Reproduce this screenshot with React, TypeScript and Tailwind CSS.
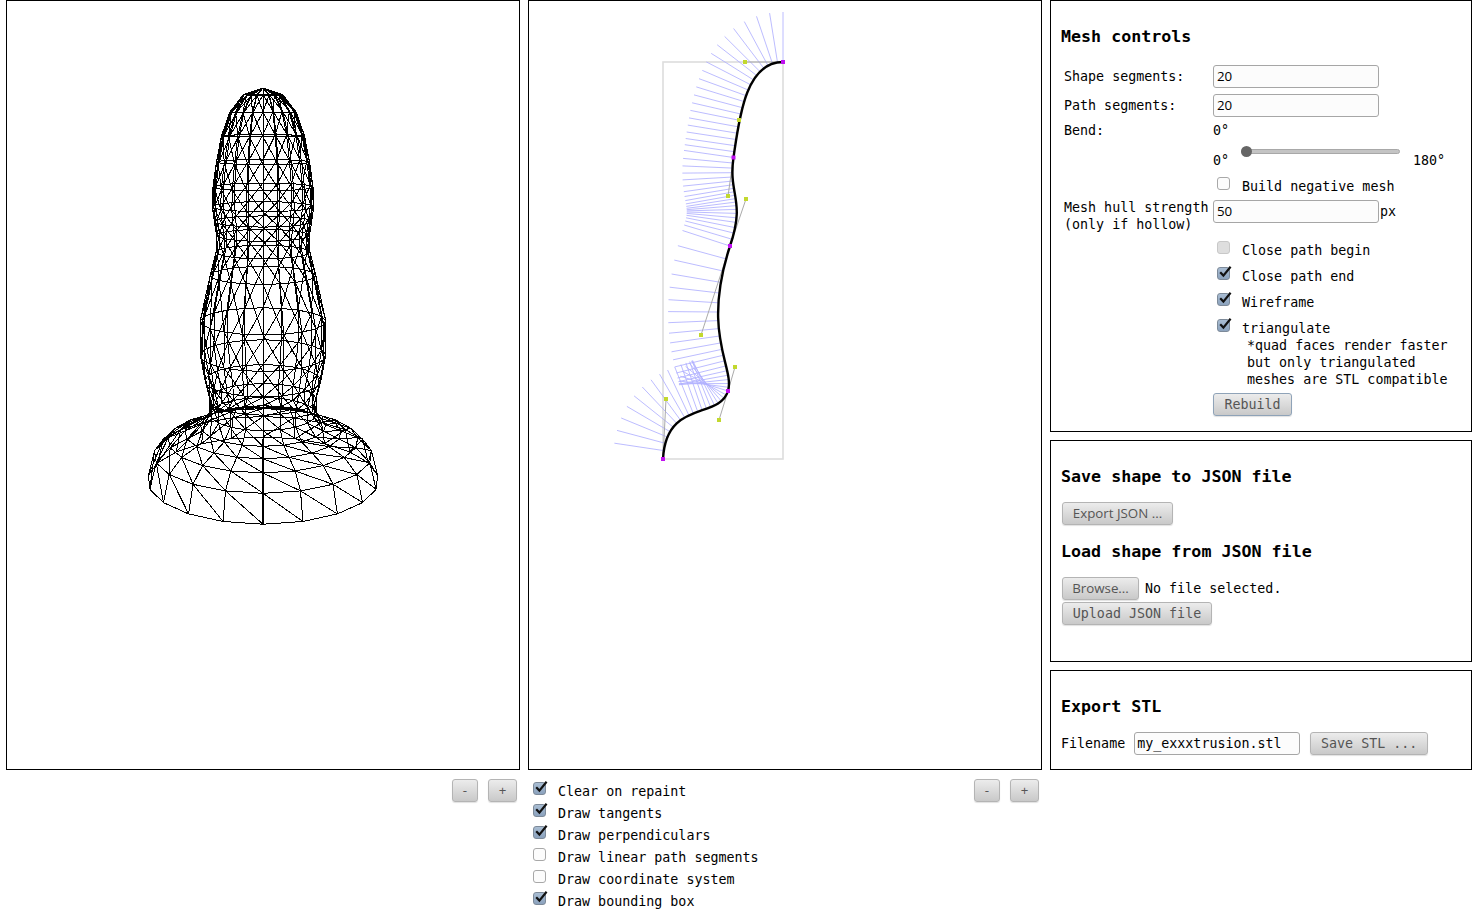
import { useMemo } from "react"

type Pt = [number, number]

// profile of the shape, in canvas coordinates of the 2d editor
const CURVES: Pt[][] = [
  [[783, 62], [745, 62], [739, 120], [733.5, 157.5]],
  [[733.5, 157.5], [728, 196], [746, 199], [730, 246]],
  [[730, 246], [701, 335], [735, 367], [728, 391]],
  [[728, 391], [719, 420], [666, 399], [663, 459]],
]

const bez = (c: Pt[], t: number): Pt => {
  const u = 1 - t
  return [
    u * u * u * c[0][0] + 3 * u * u * t * c[1][0] + 3 * u * t * t * c[2][0] + t * t * t * c[3][0],
    u * u * u * c[0][1] + 3 * u * u * t * c[1][1] + 3 * u * t * t * c[2][1] + t * t * t * c[3][1],
  ]
}

const bezD = (c: Pt[], t: number): Pt => {
  const u = 1 - t
  return [
    3 * u * u * (c[1][0] - c[0][0]) + 6 * u * t * (c[2][0] - c[1][0]) + 3 * t * t * (c[3][0] - c[2][0]),
    3 * u * u * (c[1][1] - c[0][1]) + 6 * u * t * (c[2][1] - c[1][1]) + 3 * t * t * (c[3][1] - c[2][1]),
  ]
}

function buildMesh() {
  const SEG = 20
  const rings: Pt[] = []
  CURVES.forEach((c, i) => {
    for (let s = i === 0 ? 0 : 1; s <= 5; s++) rings.push(bez(c, s / 5))
  })
  // camera tilted down by about 10 degrees
  const PITCH = 0.185
  const project = (r: number, y: number, a: number): Pt => {
    const X = r * Math.sin(a)
    const Z = -r * Math.cos(a)
    const Y = y - 62
    const depth = 932 + Z * Math.cos(PITCH) + Y * Math.sin(PITCH)
    const k = 960 / depth
    return [256 + X * k, 288 + (Y * Math.cos(PITCH) - Z * Math.sin(PITCH) - 195) * k]
  }
  let d = ""
  const line = (a: Pt, b: Pt) => {
    d += `M${a[0].toFixed(1)} ${a[1].toFixed(1)}L${b[0].toFixed(1)} ${b[1].toFixed(1)}`
  }
  for (let j = 0; j < rings.length; j++) {
    const r = 783 - rings[j][0]
    const y = rings[j][1]
    for (let i = 0; i < SEG; i++) {
      const a0 = (i / SEG) * Math.PI * 2
      const a1 = ((i + 1) / SEG) * Math.PI * 2
      const p = project(r, y, a0)
      if (j > 0) line(p, project(r, y, a1))
      if (j < rings.length - 1) {
        const r2 = 783 - rings[j + 1][0]
        const y2 = rings[j + 1][1]
        line(p, project(r2, y2, a0))
        line(p, project(r2, y2, a1))
      }
    }
  }
  return d
}

function buildPerps() {
  let d = ""
  CURVES.forEach((c) => {
    for (let s = 0; s < 20; s++) {
      const t = s / 20
      const p = bez(c, t)
      const v = bezD(c, t)
      const l = Math.hypot(v[0], v[1]) || 1
      // normal points away from the axis of the shape
      const qx = p[0] - (v[1] / l) * 50
      const qy = p[1] + (v[0] / l) * 50
      d += `M${(p[0] - 528).toFixed(1)} ${p[1].toFixed(1)}L${(qx - 528).toFixed(1)} ${qy.toFixed(1)}`
    }
  })
  return d
}

function MeshCanvas() {
  const d = useMemo(buildMesh, [])
  return (
    <svg width="512" height="768" className="block">
      <path d={d} stroke="#000" strokeWidth="1" fill="none" shapeRendering="crispEdges" />
      <path d="M256 438L256 524" stroke="#000" strokeWidth="2" fill="none" shapeRendering="crispEdges" />
    </svg>
  )
}

function ShapeCanvas() {
  const perps = useMemo(buildPerps, [])
  const curve =
    "M" + CURVES.map((c, i) => `${i === 0 ? `${c[0][0] - 529} ${c[0][1] - 1}` : ""}C${c[1][0] - 529} ${c[1][1] - 1} ${c[2][0] - 529} ${c[2][1] - 1} ${c[3][0] - 529} ${c[3][1] - 1}`).join("")
  const anchors = [CURVES[0][0], CURVES[0][3], CURVES[1][3], CURVES[2][3], CURVES[3][3]]
  const controls = CURVES.flatMap((c) => [c[1], c[2]])
  return (
    <svg width="512" height="768" className="block">
      <rect x="134" y="61" width="120" height="397" fill="none" stroke="#ddd" strokeWidth="1.6" />
      <g transform="translate(-1 -1)">
        <path d={perps} stroke="#b0b0ff" strokeWidth="1" strokeOpacity="0.85" fill="none" />
      </g>
      {CURVES.map((c, i) => (
        <g key={i} stroke="#aaa" strokeWidth="1" fill="none">
          <path d={`M${c[0][0] - 529} ${c[0][1] - 1}L${c[1][0] - 529} ${c[1][1] - 1}`} />
          <path d={`M${c[3][0] - 529} ${c[3][1] - 1}L${c[2][0] - 529} ${c[2][1] - 1}`} />
        </g>
      ))}
      <path d={curve} stroke="#000" strokeWidth="2.4" fill="none" />
      {controls.map((p, i) => (
        <rect key={i} x={p[0] - 531} y={p[1] - 3} width="4" height="4" fill="#c2d82e" />
      ))}
      {anchors.map((p, i) => (
        <rect key={i} x={p[0] - 531} y={p[1] - 3} width="4" height="4" fill="#c010f0" />
      ))}
    </svg>
  )
}

function Box({ checked, disabled }: { checked?: boolean; disabled?: boolean }) {
  return (
    <span
      className={`relative block h-[13px] w-[13px] shrink-0 rounded-[3px] border ${
        disabled
          ? "border-[#c8c8c8] bg-[#dedede]"
          : checked
            ? "border-[#7d8a99] bg-gradient-to-b from-[#a9bdd3] to-[#8ba2bd]"
            : "border-[#a8a8a8] bg-[#fcfcfc]"
      }`}
    >
      {checked && (
        <svg width="15" height="15" viewBox="0 0 15 15" className="absolute -top-[3px] left-0">
          <path d="M2.2 7.2 L5.4 10.6 L12.6 1.8" stroke="#111" strokeWidth="2.2" fill="none" />
        </svg>
      )}
    </span>
  )
}

function Btn({ children, className = "", sans }: { children: string; className?: string; sans?: boolean }) {
  return (
    <button
      className={`flex h-[23px] items-center justify-center rounded-[3px] border border-[#b4b4b4] bg-gradient-to-b from-[#ececec] to-[#c9c9c9] text-[#555] shadow-[0_1px_1px_rgba(0,0,0,0.12)] ${
        sans ? "font-['Open_Sans',sans-serif] text-[13.33px]" : ""
      } ${className}`}
    >
      {children}
    </button>
  )
}

function Field({ value, className = "" }: { value: string; className?: string }) {
  return (
    <input
      readOnly
      value={value}
      className={`h-[23px] rounded-[3px] border border-[#a6a6a6] bg-[#fcfcfc] text-black outline-none ${className}`}
    />
  )
}

function Heading({ children }: { children: string }) {
  return <h2 className="mt-px h-5 text-[16.67px] leading-5 font-bold text-black">{children}</h2>
}

function CheckRow({ label, checked, disabled }: { label: string; checked?: boolean; disabled?: boolean }) {
  return (
    <div className="ml-[153px] flex h-[26px]">
      <div className="mt-2">
        <Box checked={checked} disabled={disabled} />
      </div>
      <span className="ml-3 mt-[9px]">{label}</span>
    </div>
  )
}

function ListRow({ label, checked }: { label: string; checked?: boolean }) {
  return (
    <div className="flex h-[22px] items-start">
      <div className="mt-px">
        <Box checked={checked} />
      </div>
      <span className="ml-3 mt-[2px]">{label}</span>
    </div>
  )
}

function ZoomButtons() {
  return (
    <div className="flex gap-[10px]">
      <Btn className="w-[26px]" sans>-</Btn>
      <Btn className="w-[29px]" sans>+</Btn>
    </div>
  )
}

const NUM_FIELD = "w-[166px] pl-[3px] pb-[2px] font-['Open_Sans',sans-serif] text-[13.33px]"

export default function App() {
  return (
    <div className="flex h-[909px] gap-2 overflow-hidden bg-white pl-[6px] font-['DejaVu_Sans_Mono',monospace] text-[13.33px] leading-[17px] text-black">
      <div className="w-[514px]">
        <div className="h-[770px] border border-black">
          <MeshCanvas />
        </div>
        <div className="mt-[9px] flex justify-end pr-[3px]">
          <ZoomButtons />
        </div>
      </div>

      <div className="w-[514px]">
        <div className="h-[770px] border border-black">
          <ShapeCanvas />
        </div>
        <div className="flex justify-between pr-[3px]">
          <div className="mt-[11px] pl-[5px]">
            <ListRow label="Clear on repaint" checked />
            <ListRow label="Draw tangents" checked />
            <ListRow label="Draw perpendiculars" checked />
            <ListRow label="Draw linear path segments" />
            <ListRow label="Draw coordinate system" />
            <ListRow label="Draw bounding box" checked />
          </div>
          <div className="mt-[9px]">
            <ZoomButtons />
          </div>
        </div>
      </div>

      <div className="flex w-[422px] flex-col gap-2">
        <section className="h-[432px] border border-black pl-[10px] pt-[25px]">
          <Heading>Mesh controls</Heading>
          <div className="pl-[3px]">
            <div className="mt-[18px] flex items-center">
              <span className="w-[149px]">Shape segments:</span>
              <Field value="20" className={NUM_FIELD} />
            </div>
            <div className="mt-[6px] flex items-center">
              <span className="w-[149px]">Path segments:</span>
              <Field value="20" className={NUM_FIELD} />
            </div>
            <div className="mt-[5px] flex">
              <span className="w-[149px]">Bend:</span>
              <span>0°</span>
            </div>
            <div className="flex h-[30px] items-end">
              <span className="ml-[149px] w-[28px]">0°</span>
              <div className="relative mb-[15px] h-[5px] w-[159px] rounded-full border border-[#a8a8a8] bg-[#c4c4c4]">
                <span className="absolute -left-px -top-[4px] h-[11px] w-[11px] rounded-full bg-[#666]" />
              </div>
              <span className="ml-[13px]">180°</span>
            </div>
            <div className="flex h-[30px]">
              <div className="ml-[153px] mt-2">
                <Box />
              </div>
              <span className="ml-3 mt-[9px]">Build negative mesh</span>
            </div>
            <div className="flex h-[34px]">
              <span className="w-[149px]">
                Mesh hull strength
                <br />
                (only if hollow)
              </span>
              <Field value="50" className={`mt-px ${NUM_FIELD}`} />
              <span className="ml-[1px] mt-[4px]">px</span>
            </div>
            <CheckRow label="Close path begin" disabled />
            <CheckRow label="Close path end" checked />
            <CheckRow label="Wireframe" checked />
            <CheckRow label="triangulate" checked />
            <p className="ml-[183px] whitespace-nowrap">
              *quad faces render faster
              <br />
              but only triangulated
              <br />
              meshes are STL compatible
            </p>
            <Btn className="ml-[149px] mt-[5px] w-[79px] border-[#8fa3b8]!">Rebuild</Btn>
          </div>
        </section>

        <section className="h-[222px] border border-black pl-[10px] pt-[25px]">
          <Heading>Save shape to JSON file</Heading>
          <Btn className="ml-px mt-[15px] w-[111px]" sans>Export JSON ...</Btn>
          <div className="mt-[17px]">
            <Heading>Load shape from JSON file</Heading>
          </div>
          <div className="ml-px mt-[15px] flex items-center">
            <Btn className="w-[77px]" sans>Browse...</Btn>
            <span className="ml-[6px]">No file selected.</span>
          </div>
          <Btn className="ml-px mt-[2px] w-[150px]">Upload JSON file</Btn>
        </section>

        <section className="h-[100px] border border-black pl-[10px] pt-[25px]">
          <Heading>Export STL</Heading>
          <div className="mt-[15px] flex items-center">
            <span>Filename</span>
            {/* plain box, the native input clips the underscore */}
            <div className="ml-[9px] flex h-[23px] w-[166px] items-center rounded-[3px] border border-[#a6a6a6] bg-[#fcfcfc] pl-[2px]">
              my_exxxtrusion.stl
            </div>
            <Btn className="ml-[10px] w-[118px]">Save STL ...</Btn>
          </div>
        </section>
      </div>
    </div>
  )
}
